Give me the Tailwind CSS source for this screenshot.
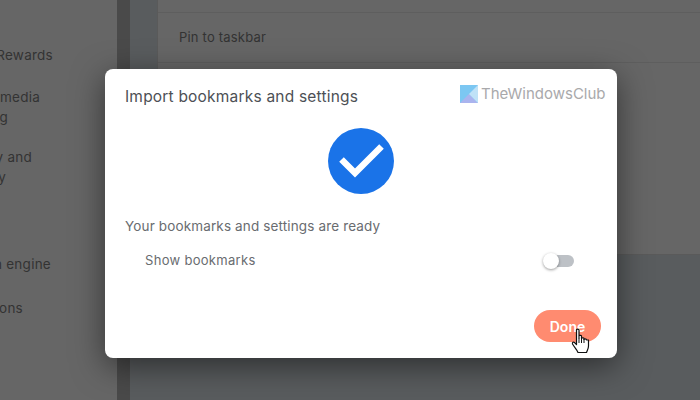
<!DOCTYPE html>
<html lang="en">
<head>
  <meta charset="UTF-8">
  <title>Import bookmarks and settings</title>
  <script src="https://cdn.jsdelivr.net/npm/@tailwindcss/browser@4"></script>
</head>
<body>
  <div class="relative flex h-[400px] w-[700px] overflow-hidden bg-[#595c5e] font-['Inter','Liberation_Sans',sans-serif]">

    <!-- settings sidebar behind the dialog -->
    <div class="h-full w-[117px] shrink-0 overflow-hidden bg-[#666666] pt-[45px] text-[13.5px] leading-[20px] tracking-[0.25px] text-[#333333]">
      <div class="flex w-[53px] justify-end whitespace-nowrap">Microsoft Rewards</div>
      <div class="mt-[22px] flex w-[40px] justify-end whitespace-nowrap">Social media</div>
      <div class="flex w-[8px] justify-end whitespace-nowrap">sharing</div>
      <div class="mt-[20px] flex w-[32px] justify-end whitespace-nowrap">Privacy and</div>
      <div class="flex w-[6px] justify-end whitespace-nowrap">security</div>
      <div class="mt-[67px] flex w-[51px] justify-end whitespace-nowrap">Search engine</div>
      <div class="mt-[24px] flex w-[23px] justify-end whitespace-nowrap">Extensions</div>
    </div>
    <div class="h-full w-[13px] shrink-0 bg-[#4a4a4a]"></div>

    <!-- main column -->
    <div class="flex-1 pl-[27px]">
      <div class="h-[255px] border-b border-l border-[#5a5a5a] bg-[#666666] text-[13px] tracking-[0.2px] text-[#333333]">
        <div class="h-[13px] border-b border-[#5e5e5e]"></div>
        <div class="flex h-[50px] items-center border-b border-[#5e5e5e] pl-[21px]">Pin to taskbar</div>
      </div>
    </div>

    <!-- dialog -->
    <div class="absolute left-[105px] top-[69px] flex h-[289px] w-[512px] flex-col rounded-lg bg-white pl-[20px] pr-[16px] shadow-[0_8px_32px_rgba(0,0,0,0.5)]">
      <h2 class="mt-[17px] text-[15.5px] leading-[22px] tracking-[0.2px] text-[#4d5055]">Import bookmarks and settings</h2>

      <div class="mt-[20px] flex justify-center pr-[4px]">
        <svg width="66" height="66" viewBox="0 0 66 66">
          <circle cx="33" cy="33" r="33" fill="#1a73e8"/>
          <path d="M13.5 31.5 L27 45 L53.5 18.5" fill="none" stroke="#ffffff" stroke-width="6.5"/>
        </svg>
      </div>

      <p class="mt-[22px] text-[13.5px] leading-[20px] tracking-[0.14px] text-[#696c70]">Your bookmarks and settings are ready</p>

      <div class="mt-[15px] flex h-[20px] items-center justify-between pl-[20px] pr-[27px] text-[13px] tracking-[0.3px] text-[#696c70]">
        <span>Show bookmarks</span>
        <div class="relative h-[12px] w-[29px] rounded-full bg-[#bdc1c6]">
          <div class="absolute left-[-2px] top-[-2px] h-[16px] w-[16px] rounded-full bg-white shadow-[0_1px_3px_rgba(0,0,0,0.4)]"></div>
        </div>
      </div>

      <div class="mt-[39px] flex justify-end">
        <button class="h-[32px] w-[67px] rounded-full bg-[#ff8b70] text-[14px] font-semibold text-white">Done</button>
      </div>
    </div>

    <!-- watermark -->
    <div class="absolute left-[460px] top-[83px] flex items-center gap-[3px] text-[15px] leading-[22px] text-[#a9a9ab]">
      <svg width="18" height="18" viewBox="0 0 18 18">
        <rect width="18" height="18" fill="#7cc7f2"/>
        <path d="M0 18 L9 9 L18 18 Z" fill="#aab4ee"/>
        <path d="M18 0 L9 9 L18 18 Z" fill="#bfe2f7"/>
      </svg>
      <span>TheWindowsClub</span>
    </div>

    <!-- mouse pointer -->
    <svg class="absolute left-[571px] top-[328px]" width="19" height="26" viewBox="0 0 19 26">
      <path d="M5.5 2 C5.5 0.8 8 0.8 8 2 L8 10 L8 8 C8 7 10.5 7 10.5 8 L10.5 10.5 C10.5 9.5 13 9.5 13 10.5 L13 11.5 C13 10.6 15.5 10.6 15.5 11.8 L17.5 12 L17.5 18 C17.5 21 16 22.5 15.5 24.5 L7 24.5 C6 22 3.5 19.5 1.5 16 C1 14.5 2.5 13.5 3.5 14.5 L5.5 16.5 Z" fill="#ffffff" stroke="#111111" stroke-width="1.2" stroke-linejoin="round"/>
      <path d="M8 10 L8 15 M10.5 10.5 L10.5 15 M13 11 L13 15" fill="none" stroke="#111111" stroke-width="1"/>
    </svg>
  </div>
</body>
</html>
